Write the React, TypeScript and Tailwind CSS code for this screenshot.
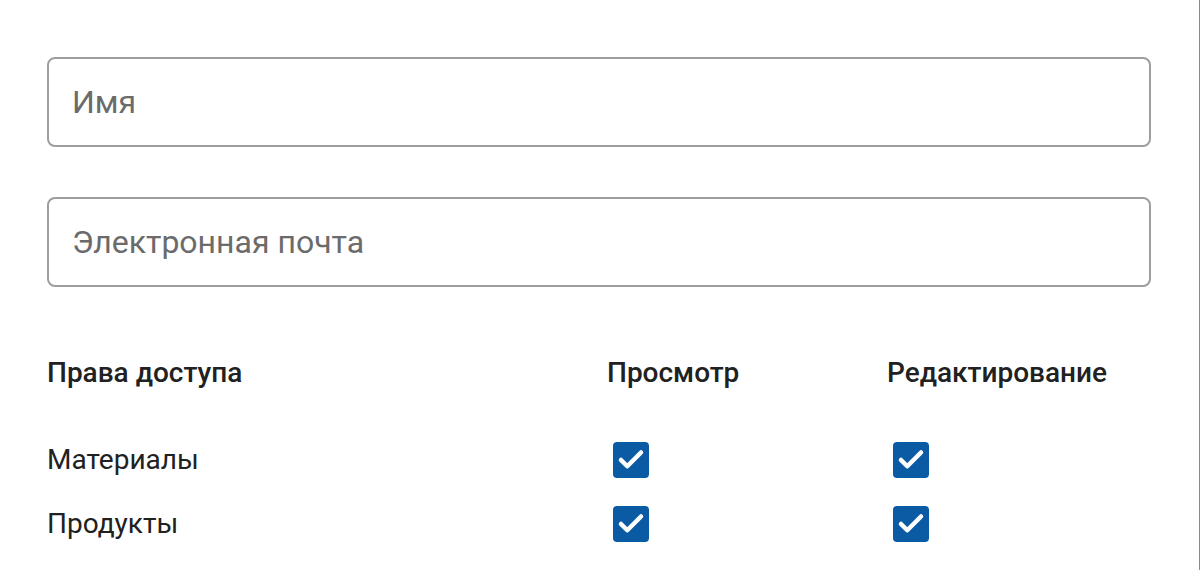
import { Check } from 'lucide-react';

const rows = ['Материалы', 'Продукты'];

function Box() {
  return (
    <div className="ml-[6px] w-[36px] h-[36px] rounded-[4px] bg-[#0b5ba4] flex items-center justify-center">
      <Check size={30} strokeWidth={3.6} className="text-white" />
    </div>
  );
}

export default function App() {
  return (
    <div
      className="w-[1200px] h-[570px] bg-white border-r border-[#8a8a8a] pl-[47px] pr-[48px] pt-[57px] text-[#212121]"
      style={{ fontFamily: 'Roboto, "Noto Sans", sans-serif' }}
    >
      <div className="flex flex-col gap-[50px]">
        <input
          className="h-[90px] w-full border-2 border-[#9e9e9e] rounded-lg pl-[23px] text-[32px] text-[#212121] placeholder:text-[#6b6b6b] outline-none"
          placeholder="Имя"
        />
        <input
          className="h-[90px] w-full border-2 border-[#9e9e9e] rounded-lg pl-[23px] text-[32px] text-[#212121] placeholder:text-[#6b6b6b] outline-none"
          placeholder="Электронная почта"
        />
      </div>

      <div className="grid grid-cols-[560px_280px_1fr] mt-[70px] text-[28px] font-medium leading-[32px]">
        <div>Права доступа</div>
        <div>Просмотр</div>
        <div>Редактирование</div>
      </div>

      <div className="mt-[53px] flex flex-col gap-[28px]">
        {rows.map((r) => (
          <div key={r} className="grid grid-cols-[560px_280px_1fr] items-center h-[36px] text-[28px] leading-[36px]">
            <div>{r}</div>
            <Box />
            <Box />
          </div>
        ))}
      </div>
    </div>
  );
}
